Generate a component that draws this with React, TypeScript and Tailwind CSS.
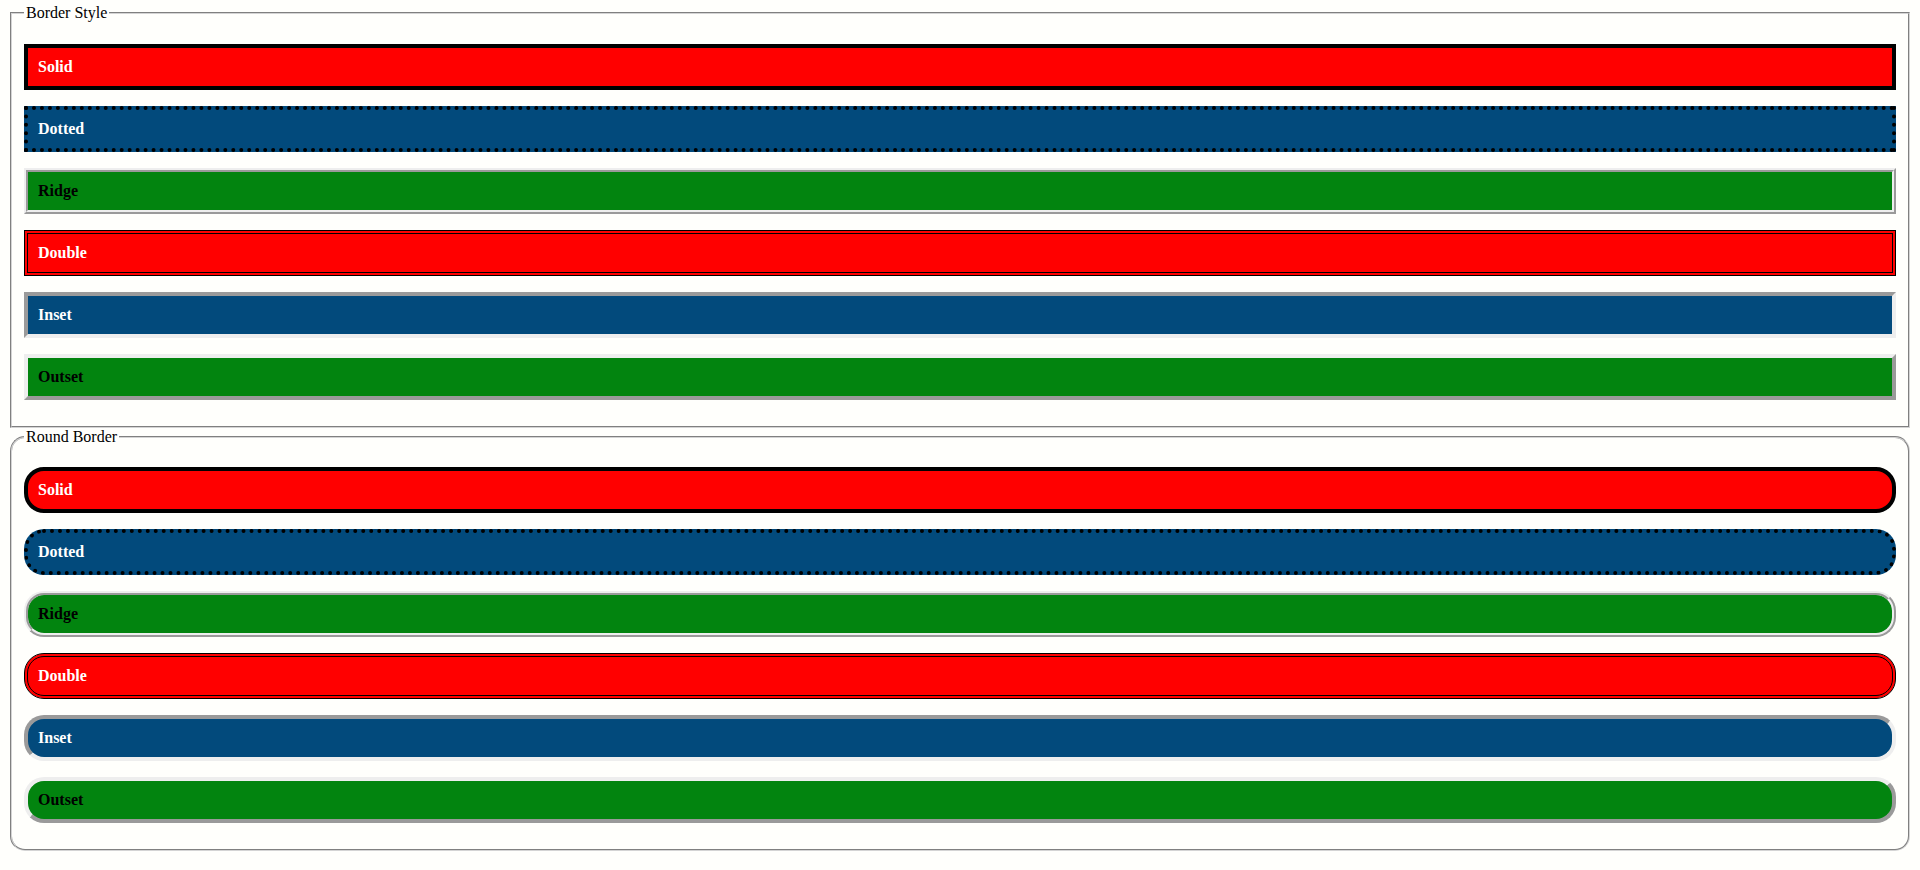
import React from "react";

type Bar = {
  label: string;
  className: string;
};

const bars: Bar[] = [
  { label: "Solid", className: "bg-[#ff0000] text-white border-black [--tw-border-style:solid] [border-style:solid]" },
  { label: "Dotted", className: "bg-[#024a7c] text-white border-black [--tw-border-style:dotted] [border-style:dotted]" },
  { label: "Ridge", className: "bg-[#02840f] text-black border-[#eeeeee] [--tw-border-style:ridge] [border-style:ridge]" },
  { label: "Double", className: "bg-[#ff0000] text-white border-black [--tw-border-style:double] [border-style:double]" },
  { label: "Inset", className: "bg-[#024a7c] text-white border-[#eeeeee] [--tw-border-style:inset] [border-style:inset]" },
  { label: "Outset", className: "bg-[#02840f] text-black border-[#eeeeee] [--tw-border-style:outset] [border-style:outset]" },
];

const Group = ({ title, round }: { title: string; round?: boolean }) => {
  return (
    <fieldset
      className={
        "mx-[2px] border-2 border-[#d4d4d4] [--tw-border-style:groove] [border-style:groove] px-3 pt-[5.6px] pb-[10px] " +
        (round ? "rounded-[15px]" : "")
      }
    >
      <legend className="px-[2px]">{title}</legend>
      {bars.map(({ label, className }) => (
        <div
          key={label}
          className={
            "my-4 border-4 p-[10px] font-bold " +
            className +
            (round ? " rounded-[20px]" : "")
          }
        >
          {label}
        </div>
      ))}
    </fieldset>
  );
};

export default function App() {
  return (
    <div
      className="min-h-screen bg-[#fffffc] px-2 pt-1 text-[16px] leading-[normal] text-black"
      style={{ fontFamily: '"Liberation Serif", "Times New Roman", serif' }}
    >
      <Group title="Border Style" />
      <Group title="Round Border" round />
    </div>
  );
}
